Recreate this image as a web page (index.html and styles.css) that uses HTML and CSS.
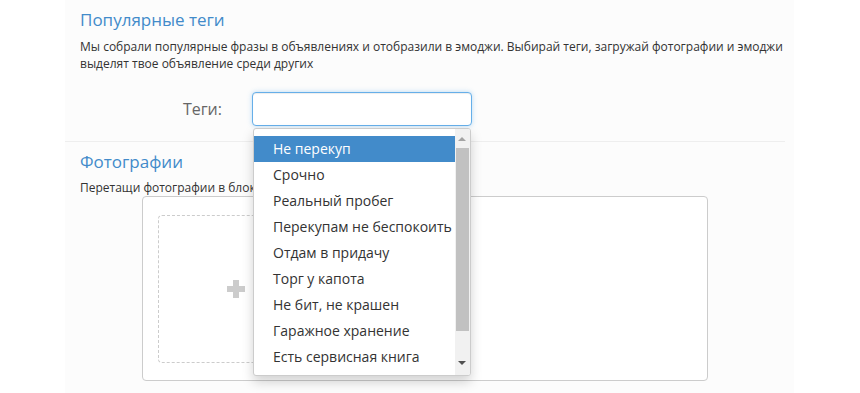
FILE: index.html
```html
<!DOCTYPE html>
<html lang="ru">
<head>
  <meta charset="UTF-8" />
  <meta name="viewport" content="width=device-width, initial-scale=1.0"/>
  <title>Теги и фотографии</title>
  <link rel="stylesheet" href="styles.css">
</head>
<body>
  <div class="page">
    <section class="block">
      <h2>Популярные теги</h2>
      <p class="hint">
        Мы собрали популярные фразы в объявлениях и отобразили в эмоджи. Выбирай теги, загружай фотографии и эмоджи выделят твое объявление среди других
      </p>

      <div class="row">
        <label for="tags">Теги:</label>
        <div class="select-wrap">
          <input type="text" id="tags" class="tags-input">
          <div class="dropdown">
            <ul class="options">
              <li class="active">Не перекуп</li>
              <li>Срочно</li>
              <li>Реальный пробег</li>
              <li>Перекупам не беспокоить</li>
              <li>Отдам в придачу</li>
              <li>Торг у капота</li>
              <li>Не бит, не крашен</li>
              <li>Гаражное хранение</li>
              <li>Есть сервисная книга</li>
            </ul>
            <div class="scrollbar">
              <span class="arrow up"></span>
              <span class="thumb"></span>
              <span class="arrow down"></span>
            </div>
          </div>
        </div>
      </div>
    </section>

    <section class="block photos">
      <h2>Фотографии</h2>
      <p class="hint">Перетащи фотографии в блок ниже</p>
      <div class="dropzone">
        <div class="add-photo">
          <span class="plus"></span>
        </div>
      </div>
    </section>
  </div>
</body>
</html>
```

FILE: styles.css
```css
body {
  margin: 0;
  background: #fff;
  font-family: 'Open Sans', sans-serif;
  color: #333;
}
.page {
  margin-left: 65px;
  width: 729px;
  min-height: 393px;
  background: #fcfcfc;
}
.block {
  padding: 8px 0 15px 15px;
  margin-right: 9px;
}
.block h2 {
  margin: 0;
  font-size: 17px;
  line-height: 24px;
  font-weight: normal;
  color: #428bca;
}
.hint {
  margin: 6px 0 0;
  font-size: 12px;
  line-height: 17px;
}
.row {
  display: flex;
  align-items: center;
  gap: 30px;
  margin-top: 20px;
}
.row label {
  width: 142px;
  text-align: right;
  font-size: 16px;
  color: #666;
}
.select-wrap {
  position: relative;
}
.tags-input {
  display: block;
  width: 220px;
  height: 34px;
  box-sizing: border-box;
  border: 1px solid #66afe9;
  border-radius: 4px;
  outline: none;
  background: #fff;
  box-shadow: inset 0 1px 1px rgba(0,0,0,0.075), 0 0 5px rgba(102,175,233,0.45);
}
.dropdown {
  position: absolute;
  top: 36px;
  left: 1px;
  width: 218px;
  height: 248px;
  box-sizing: border-box;
  border: 1px solid #ccc;
  border-radius: 3px;
  background: #fff;
  box-shadow: 0 6px 12px rgba(0,0,0,0.175);
  overflow: hidden;
  z-index: 10;
}
.options {
  list-style: none;
  margin: 0;
  padding: 7px 15px 0 0;
}
.options li {
  height: 26px;
  line-height: 26px;
  padding-left: 19px;
  font-size: 14px;
  white-space: nowrap;
}
.options li.active {
  background: #428bca;
  color: #fff;
}
.scrollbar {
  position: absolute;
  top: 0;
  right: 0;
  bottom: 0;
  width: 15px;
  background: #f1f1f1;
}
.thumb {
  position: absolute;
  top: 19px;
  left: 1px;
  right: 1px;
  height: 183px;
  background: #c1c1c1;
}
.arrow {
  position: absolute;
  left: 3px;
  width: 0;
  height: 0;
  border-left: 4.5px solid transparent;
  border-right: 4.5px solid transparent;
}
.arrow.up {
  top: 8px;
  border-bottom: 4px solid #a3a3a3;
}
.arrow.down {
  bottom: 10px;
  border-top: 4px solid #505050;
}
.photos {
  border-top: 1px solid #eee;
  padding-bottom: 0;
}
.photos .hint {
  margin-top: 5px;
}
.dropzone {
  margin-left: 62px;
  width: 566px;
  height: 185px;
  box-sizing: border-box;
  border: 1px solid #ccc;
  border-radius: 4px;
  padding: 18px 15px;
  background: #fff;
}
.add-photo {
  width: 155px;
  height: 148px;
  box-sizing: border-box;
  border: 1px dashed #ccc;
  border-radius: 4px;
  display: flex;
  align-items: center;
  justify-content: center;
}
.plus {
  position: relative;
  width: 18px;
  height: 18px;
}
.plus::before,
.plus::after {
  content: "";
  position: absolute;
  background: #ccc;
}
.plus::before {
  left: 6px;
  top: 0;
  width: 6px;
  height: 18px;
}
.plus::after {
  top: 6px;
  left: 0;
  width: 18px;
  height: 6px;
}
```
